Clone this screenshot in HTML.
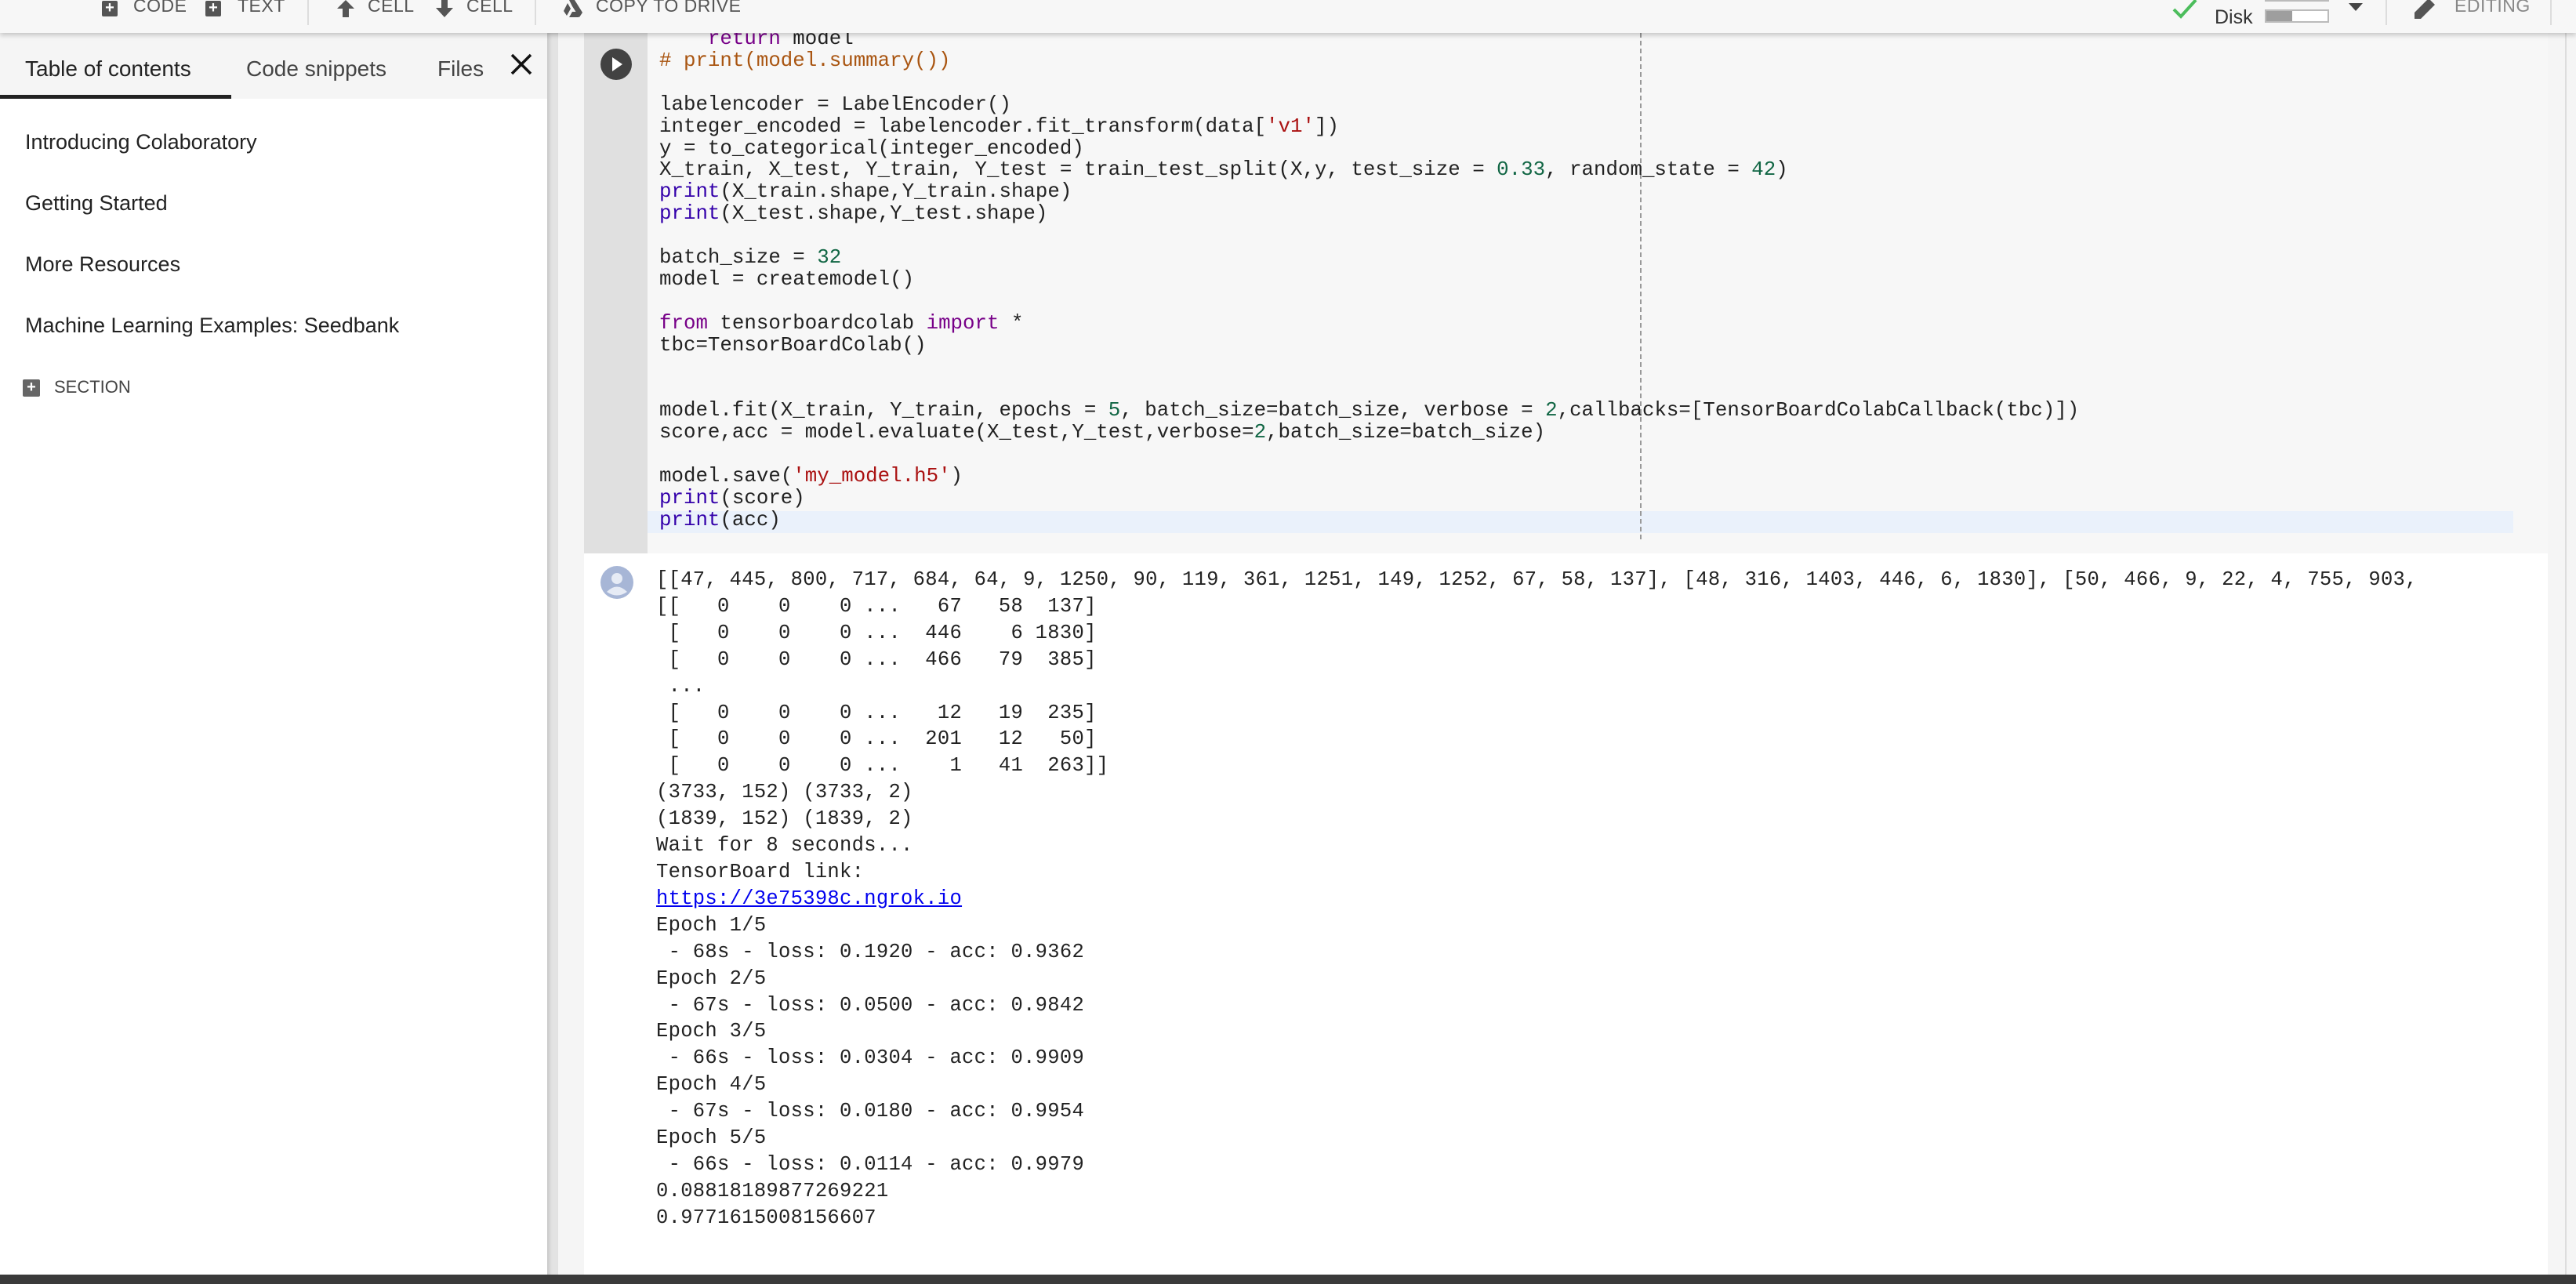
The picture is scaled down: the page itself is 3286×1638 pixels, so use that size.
<!DOCTYPE html>
<html><head><meta charset="utf-8"><style>
*{margin:0;padding:0;box-sizing:border-box}
body{width:3286px;height:1638px;overflow:hidden;background:#f5f5f5;font-family:"Liberation Sans",sans-serif;position:relative}
.abs{position:absolute}
#tb{left:0;top:0;width:3286px;height:42px;background:#f7f7f7;box-shadow:0 3px 6px rgba(0,0,0,.2);z-index:5;overflow:hidden}
.tbt{position:absolute;top:-6px;font-size:23px;color:#555;letter-spacing:.5px}
.pl{position:absolute;top:1px;width:20px;height:20px;background:#555;border-radius:2px;color:#fff;font-size:20px;line-height:18px;text-align:center;font-weight:bold}
#side{left:0;top:42px;width:698px;height:1596px;background:#fff}
#tabs{left:0;top:0;width:698px;height:84px;background:#f5f5f5}
.tab{position:absolute;top:30px;font-size:28px;color:#333}
.item{position:absolute;left:32px;font-size:27px;color:#222}
#div{left:698px;top:42px;width:14px;height:1596px;background:#e3e3e3;box-shadow:inset 3px 0 4px rgba(0,0,0,.12)}
#gut{left:745px;top:42px;width:81px;height:664px;background:#e0e0e0}
#code{left:826px;top:42px;width:2424px;height:664px;background:#f7f7f7;overflow:hidden}
pre{font-family:"Liberation Mono",monospace}
#codepre{position:absolute;left:15px;top:-6px;font-size:25.8px;line-height:27.9px;color:#222}
.k{color:#770088}.b{color:#3300aa}.c{color:#a95511}.s{color:#aa1111}.n{color:#116644}
#out{left:745px;top:706px;width:2505px;height:920px;background:#fff;overflow:hidden}
#outpre{position:absolute;left:92px;top:17px;font-size:25.5px;line-height:33.9px;letter-spacing:0.3px;color:#222;white-space:pre}
#bot{left:0;top:1626px;width:3286px;height:12px;background:#3a3a3a}
</style></head><body>
<div id="tb" class="abs">
 <div class="pl" style="left:130px">+</div><div class="tbt" style="left:170px">CODE</div>
 <div class="pl" style="left:262px">+</div><div class="tbt" style="left:303px">TEXT</div>
 <div class="abs" style="left:392px;top:0;width:2px;height:32px;background:#ddd"></div>
 <svg class="abs" style="left:428px;top:0" width="26" height="22"><path d="M13 0 L24 11 L17 11 L17 22 L9 22 L9 11 L2 11Z" fill="#555"/></svg>
 <div class="tbt" style="left:469px">CELL</div>
 <svg class="abs" style="left:554px;top:0" width="26" height="22"><path d="M9 0 L17 0 L17 10 L24 10 L13 22 L2 10 L9 10Z" fill="#555"/></svg>
 <div class="tbt" style="left:595px">CELL</div>
 <div class="abs" style="left:682px;top:0;width:2px;height:32px;background:#ddd"></div>
 <svg class="abs" style="left:718px;top:0" width="26" height="22"><path d="M8 0 L15 0 L25 16 L21 22 L12 8Z M6 4 L10 11 L5 20 L1 14Z M8 22 L12 15 L24 15 L20 22Z" fill="#555"/></svg>
 <div class="tbt" style="left:760px">COPY TO DRIVE</div>
 <svg class="abs" style="left:2770px;top:0" width="34" height="24"><path d="M3 12 L12 21 L31 0" stroke="#4cbd5c" stroke-width="4" fill="none"/></svg>
 <div class="abs" style="left:2889px;top:-8px;width:82px;height:10px;border:3px solid #bbb;border-top:none"></div>
 <div class="abs" style="left:2825px;top:8px;font-size:25px;color:#333">Disk</div>
 <div class="abs" style="left:2889px;top:12px;width:82px;height:17px;border:2px solid #bbb;background:#fff"><div style="width:33px;height:13px;background:#9e9e9e"></div></div>
 <svg class="abs" style="left:2996px;top:4px" width="18" height="10"><path d="M0 0 L18 0 L9 10Z" fill="#444"/></svg>
 <div class="abs" style="left:3043px;top:0;width:2px;height:32px;background:#ddd"></div>
 <svg class="abs" style="left:3080px;top:0" width="34" height="24"><path d="M0 24 L0 16 L18 -2 L26 6 L8 24Z" fill="#555"/></svg>
 <div class="tbt" style="left:3131px;color:#888">EDITING</div>
 <div class="abs" style="left:3253px;top:0;width:2px;height:32px;background:#ddd"></div>
</div>
<div id="side" class="abs">
 <div id="tabs" class="abs">
  <div class="tab" style="left:32px;color:#222">Table of contents</div>
  <div class="tab" style="left:314px;color:#444">Code snippets</div>
  <div class="tab" style="left:558px;color:#444">Files</div>
  <svg class="abs" style="left:651px;top:26px" width="28" height="28"><path d="M2 2 L26 26 M26 2 L2 26" stroke="#111" stroke-width="3.5"/></svg>
  <div class="abs" style="left:0;top:79px;width:295px;height:5px;background:#222"></div>
 </div>
 <div class="item" style="top:124px">Introducing Colaboratory</div>
 <div class="item" style="top:202px">Getting Started</div>
 <div class="item" style="top:280px">More Resources</div>
 <div class="item" style="top:358px">Machine Learning Examples: Seedbank</div>
 <div class="pl" style="left:29px;top:442px;width:22px;height:22px;background:#666;line-height:21px">+</div>
 <div class="abs" style="left:69px;top:439px;font-size:22px;color:#444">SECTION</div>
</div>
<div id="div" class="abs"></div>
<div id="gut" class="abs"></div>
<svg class="abs" style="left:766px;top:62px" width="40" height="40"><circle cx="20" cy="20" r="20" fill="#424242"/><path d="M15 11 L28 20 L15 29Z" fill="#fff"/></svg>
<div id="code" class="abs">
 <div class="abs" style="left:0;top:610px;width:2380px;height:28px;background:#eaf1fb"></div>
 <div class="abs" style="left:1266px;top:0;height:646px;border-left:2px dashed #999"></div>
<pre id="codepre">    <span class="k">return</span> model
<span class="c"># print(model.summary())</span>

labelencoder = LabelEncoder()
integer_encoded = labelencoder.fit_transform(data[<span class="s">'v1'</span>])
y = to_categorical(integer_encoded)
X_train, X_test, Y_train, Y_test = train_test_split(X,y, test_size = <span class="n">0.33</span>, random_state = <span class="n">42</span>)
<span class="b">print</span>(X_train.shape,Y_train.shape)
<span class="b">print</span>(X_test.shape,Y_test.shape)

batch_size = <span class="n">32</span>
model = createmodel()

<span class="k">from</span> tensorboardcolab <span class="k">import</span> *
tbc=TensorBoardColab()


model.fit(X_train, Y_train, epochs = <span class="n">5</span>, batch_size=batch_size, verbose = <span class="n">2</span>,callbacks=[TensorBoardColabCallback(tbc)])
score,acc = model.evaluate(X_test,Y_test,verbose=<span class="n">2</span>,batch_size=batch_size)

model.save(<span class="s">'my_model.h5'</span>)
<span class="b">print</span>(score)
<span class="b">print</span>(acc)</pre>
</div>
<div id="out" class="abs">
 <svg class="abs" style="left:21px;top:16px" width="42" height="42"><circle cx="21" cy="21" r="21" fill="#a7b6d6"/><circle cx="21" cy="16" r="7" fill="#e6ebf5"/><path d="M8 33 Q21 20 34 33 Q21 42 8 33Z" fill="#e6ebf5"/></svg>
<pre id="outpre">[[47, 445, 800, 717, 684, 64, 9, 1250, 90, 119, 361, 1251, 149, 1252, 67, 58, 137], [48, 316, 1403, 446, 6, 1830], [50, 466, 9, 22, 4, 755, 903, 
[[   0    0    0 ...   67   58  137]
 [   0    0    0 ...  446    6 1830]
 [   0    0    0 ...  466   79  385]
 ...
 [   0    0    0 ...   12   19  235]
 [   0    0    0 ...  201   12   50]
 [   0    0    0 ...    1   41  263]]
(3733, 152) (3733, 2)
(1839, 152) (1839, 2)
Wait for 8 seconds...
TensorBoard link:
<span style="color:#0000ee;text-decoration:underline">https://3e75398c.ngrok.io</span>
Epoch 1/5
 - 68s - loss: 0.1920 - acc: 0.9362
Epoch 2/5
 - 67s - loss: 0.0500 - acc: 0.9842
Epoch 3/5
 - 66s - loss: 0.0304 - acc: 0.9909
Epoch 4/5
 - 67s - loss: 0.0180 - acc: 0.9954
Epoch 5/5
 - 66s - loss: 0.0114 - acc: 0.9979
0.08818189877269221
0.9771615008156607</pre>
</div>
<div class="abs" style="left:3272px;top:42px;width:2px;height:1584px;background:#ddd"></div>
<div id="bot" class="abs"></div>
</body></html>
